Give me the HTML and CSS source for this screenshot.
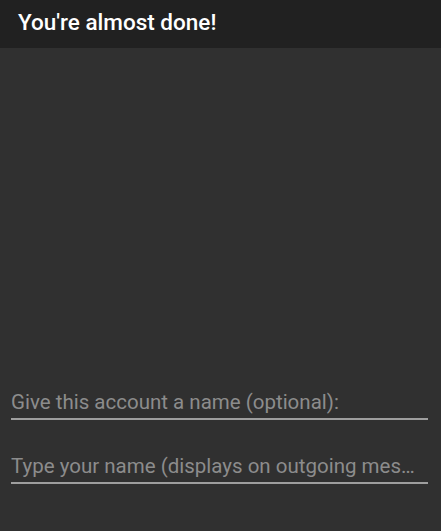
FILE: index.html
```html
<!DOCTYPE html>
<html>
<head>
<meta charset="utf-8">
<link rel="stylesheet" href="styles.css">
</head>
<body>
<div class="app">
  <header class="toolbar"><h1 class="title">You're almost done!</h1></header>
  <main class="content">
    <div class="spacer"></div>
    <div class="field"><input class="input" type="text" placeholder="Give this account a name (optional):"></div>
    <div class="field"><input class="input" type="text" placeholder="Type your name (displays on outgoing messages)"></div>
  </main>
</div>
</body>
</html>
```
FILE: styles.css
```css
html, body { margin: 0; padding: 0; height: 100%; }
body { background: #303030; font-family: Roboto, "Noto Sans", sans-serif; }
.app { display: flex; flex-direction: column; height: 531px; }
.toolbar { height: 48px; background: #212121; display: flex; align-items: center; padding: 0 18px; box-sizing: border-box; flex: none; }
.title { margin: 0; color: #ffffff; font-size: 22.5px; font-weight: 500; line-height: 1; padding-bottom: 3px; }
.content { flex: 1; display: flex; flex-direction: column; padding: 0 13px 47px 11px; }
.spacer { flex: 1; }
.field { margin-top: 24px; }
.field:first-of-type { margin-top: 0; }
.input { display: block; width: 100%; box-sizing: border-box; background: transparent; border: none; border-bottom: 2px solid #9e9e9e; padding: 6px 10px 0 0; margin: 0; font-family: Roboto, sans-serif; font-size: 20.5px; color: #e0e0e0; outline: none; text-overflow: ellipsis; line-height: 26px; height: 40px; }
.input::placeholder { color: #8c8c8c; opacity: 1; }
```
